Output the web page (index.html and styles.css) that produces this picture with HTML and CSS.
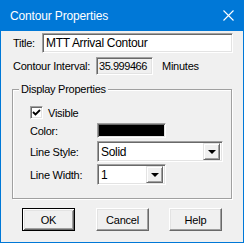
FILE: index.html
```html
<!DOCTYPE html>
<html lang="en">
<head>
    <meta charset="UTF-8">
    <title>Contour Properties</title>
    <link rel="stylesheet" href="styles.css">
</head>
<body>
    <div class="window">
        <div class="titlebar">
            <span class="caption">Contour Properties</span>
            <svg class="close" width="11" height="11" viewBox="0 0 11 11">
                <path d="M0.5 0.5 L10.5 10.5 M10.5 0.5 L0.5 10.5" stroke="#fff" stroke-width="1.1" fill="none"/>
            </svg>
        </div>
        <div class="content">
            <div class="row row-title">
                <label class="lbl lbl-title">Title:</label>
                <div class="edit edit-title">MTT Arrival Contour</div>
            </div>
            <div class="row row-interval">
                <label class="lbl lbl-interval">Contour Interval:</label>
                <div class="edit edit-interval">35.999466</div>
                <span class="units">Minutes</span>
            </div>
            <div class="group">
                <div class="legend">Display Properties</div>
                <div class="check-row">
                    <span class="checkbox">
                        <svg width="9" height="9" viewBox="0 0 9 9">
                            <path d="M1 4 L3.5 6.5 L8 2" stroke="#000" stroke-width="1.8" fill="none"/>
                        </svg>
                    </span>
                    <span class="check-label">Visible</span>
                </div>
                <div class="prop-row row-color">
                    <span class="prop-label">Color:</span>
                    <span class="swatch"></span>
                </div>
                <div class="prop-row row-style">
                    <span class="prop-label">Line Style:</span>
                    <div class="combo combo-style">
                        <span class="combo-text">Solid</span>
                        <span class="combo-btn"><span class="arrow"></span></span>
                    </div>
                </div>
                <div class="prop-row row-width">
                    <span class="prop-label">Line Width:</span>
                    <div class="combo combo-width">
                        <span class="combo-text">1</span>
                        <span class="combo-btn"><span class="arrow"></span></span>
                    </div>
                </div>
            </div>
            <div class="buttons">
                <button class="btn btn-default">OK</button>
                <button class="btn btn-cancel">Cancel</button>
                <button class="btn btn-help">Help</button>
            </div>
        </div>
    </div>
</body>
</html>
```

FILE: styles.css
```css
* { box-sizing: border-box; }
body {
    margin: 0;
    padding: 0;
    font-family: 'Liberation Sans', Arial, sans-serif;
    font-size: 11px;
    letter-spacing: -0.25px;
    color: #000;
    background: #f0f0f0;
}
.window {
    width: 244px;
    height: 243px;
    background: #f0f0f0;
    border: 1px solid #0078d7;
    border-top: none;
}
.titlebar {
    height: 31px;
    margin: 0 -1px;
    background: #0078d7;
    color: #fff;
    display: flex;
    align-items: center;
    padding-left: 10px;
    padding-right: 10px;
}
.caption {
    font-size: 12px;
    letter-spacing: -0.15px;
    flex: 1;
    margin-top: 1px;
}
.close {
    display: block;
}
.content {
    padding: 2px 0 0 12px;
}
.row {
    display: flex;
    align-items: center;
}
.lbl-title { width: 29px; }
.lbl-interval { width: 83px; }
.edit {
    background: #fff;
    border: 1px solid;
    border-color: #a0a0a0 #fff #fff #a0a0a0;
    box-shadow: inset 1px 1px 0 #696969, inset -1px -1px 0 #e3e3e3;
    padding: 0 0 0 3px;
    display: flex;
    align-items: center;
}
.edit-title {
    width: 191px;
    height: 20px;
    font-size: 12px;
    letter-spacing: -0.3px;
}
.row-interval {
    margin-top: 4px;
}
.edit-interval {
    width: 57px;
    height: 18px;
    padding-left: 2px;
    letter-spacing: -0.45px;
    background: #f0f0f0;
}
.units {
    margin-left: 9px;
}
.group {
    margin: 14px 0 0 -1px;
    width: 220px;
    height: 110px;
    border: 1px solid #a0a0a0;
    box-shadow: 1px 1px 0 #fff, inset 1px 1px 0 #fff;
}
.legend {
    display: table;
    margin: -7px 0 0 6px;
    padding: 0 2px;
    line-height: 13px;
    background: #f0f0f0;
}
.check-row {
    display: flex;
    align-items: center;
    margin: 10px 0 0 17px;
    height: 13px;
}
.checkbox {
    width: 13px;
    height: 13px;
    background: #fff;
    border: 1px solid;
    border-color: #a0a0a0 #fff #fff #a0a0a0;
    box-shadow: inset 1px 1px 0 #696969, inset -1px -1px 0 #e3e3e3;
    display: flex;
    align-items: center;
    justify-content: center;
}
.checkbox svg { display: block; }
.check-label {
    margin-left: 5px;
}
.prop-row {
    display: flex;
    align-items: center;
    margin-left: 17px;
}
.prop-label {
    width: 67px;
}
.row-color { margin-top: 4px; }
.row-style { margin-top: 3px; }
.row-width { margin-top: 2px; }
.swatch {
    width: 69px;
    height: 15px;
    background: #000;
    border: 1px solid;
    border-color: #a0a0a0 #fff #fff #a0a0a0;
    box-shadow: inset 1px 1px 0 #696969, inset -1px -1px 0 #e3e3e3;
}
.combo {
    height: 21px;
    background: #fff;
    border: 1px solid;
    border-color: #a0a0a0 #fff #fff #a0a0a0;
    box-shadow: inset 1px 1px 0 #696969, inset -1px -1px 0 #e3e3e3;
    display: flex;
    align-items: center;
    padding: 2px 2px 2px 3px;
}
.combo-style { width: 126px; }
.combo-width { width: 69px; }
.combo-text {
    flex: 1;
    font-size: 12px;
    letter-spacing: -0.3px;
}
.combo-btn {
    width: 17px;
    height: 17px;
    background: #f0f0f0;
    border: 1px solid;
    border-color: #e3e3e3 #696969 #696969 #e3e3e3;
    box-shadow: inset 1px 1px 0 #fff, inset -1px -1px 0 #a0a0a0;
    display: flex;
    align-items: center;
    justify-content: center;
}
.arrow {
    width: 0;
    height: 0;
    border-left: 4px solid transparent;
    border-right: 4px solid transparent;
    border-top: 4px solid #000;
    margin-top: 1px;
}
.buttons {
    display: flex;
    margin-top: 9px;
    padding-left: 9px;
}
.btn {
    width: 53px;
    height: 23px;
    font-family: inherit;
    font-size: 11px;
    letter-spacing: -0.2px;
    color: #000;
    background: #f0f0f0;
    border: 1px solid;
    border-color: #fff #696969 #696969 #fff;
    box-shadow: inset -1px -1px 0 #a0a0a0, inset 1px 1px 0 #e3e3e3;
    padding: 0;
}
.btn-default {
    border-color: #000;
    box-shadow: inset 1px 1px 0 #fff, inset -1px -1px 0 #696969, inset 2px 2px 0 #e3e3e3, inset -2px -2px 0 #a0a0a0;
}
.btn-cancel { margin-left: 21px; }
.btn-help { margin-left: 20px; }
```
